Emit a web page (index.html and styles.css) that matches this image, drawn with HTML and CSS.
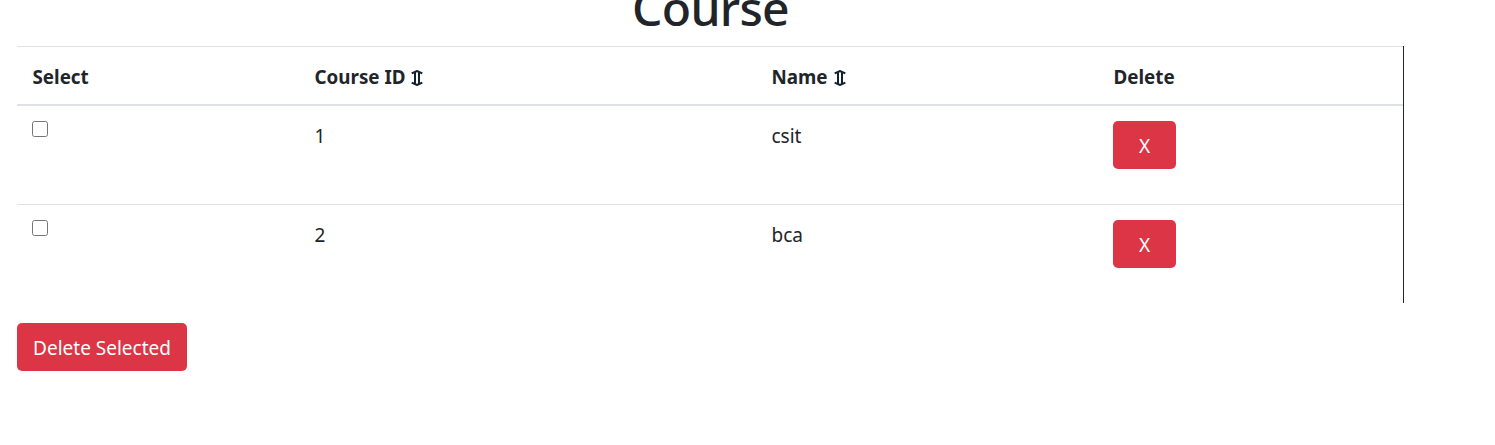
FILE: index.html
```html
<!DOCTYPE html>
<html lang="en">
<head>
<meta charset="utf-8">
<title>Course</title>
<link rel="stylesheet" href="styles.css">
</head>
<body>
<main class="page">
  <h1 class="title">Course</h1>
  <table class="courses">
    <colgroup><col class="col-select"><col class="col-id"><col class="col-name"><col class="col-delete"></colgroup>
    <thead>
      <tr>
        <th>Select</th>
        <th>Course ID<svg class="sort" viewBox="0 0 12 16"><path d="M.7 3.400 6 1l5.300 2.400M.7 12.600 6 15l5.300-2.400M4 2.500v11M8 2.500v11"/></svg></th>
        <th>Name<svg class="sort" viewBox="0 0 12 16"><path d="M.7 3.400 6 1l5.300 2.400M.7 12.600 6 15l5.300-2.400M4 2.500v11M8 2.500v11"/></svg></th>
        <th>Delete</th>
      </tr>
    </thead>
    <tbody>
      <tr><td><input class="check" type="checkbox"></td><td>1</td><td>csit</td><td><button class="btn btn-x">X</button></td></tr>
      <tr><td><input class="check" type="checkbox"></td><td>2</td><td>bca</td><td><button class="btn btn-x">X</button></td></tr>
    </tbody>
  </table>
  <button class="btn btn-all">Delete Selected</button>
</main>
</body>
</html>
```
FILE: styles.css
```css
* { box-sizing: border-box; }
body { margin: 0; background: #fff; color: #212529; font: 20px/30px "Noto Sans", sans-serif; overflow: hidden; }
.page { width: 1387px; margin-left: 17px; }
.title { height: 46px; margin: 0; padding-bottom: 9px; display: flex; justify-content: center; align-items: flex-end; font-size: 48px; line-height: 58px; font-weight: 500; letter-spacing: -0.7px; }
.courses { width: 1387px; table-layout: fixed; border-collapse: separate; border-spacing: 0; border-right: 1px solid #212529; }
.col-select { width: 282px; }
.col-id { width: 457px; }
.col-name { width: 342px; }
th, td { padding: 15px 15px 15px 15.5px; text-align: left; vertical-align: top; }
th { height: 60px; padding-bottom: 12px; border-top: 1px solid #dee2e6; border-bottom: 2px solid #dee2e6; font-size: 18.8px; font-weight: 700; }
td { height: 98px; font-size: 19px; }
td:first-child, td:last-child { padding-left: 15px; }
tr + tr td { height: 99px; border-top: 1px solid #dee2e6; }
.sort { width: 12px; height: 16px; margin-left: 6px; vertical-align: -2px; fill: none; stroke: #14202e; stroke-width: 2; }
.check { display: block; width: 16px; height: 16px; margin: 0; }
.btn { display: block; height: 48px; padding: 2px 0 0; border: 0; border-radius: 5px; background: #dc3545; color: #fff; font: 19px/30px "Noto Sans", sans-serif; }
.btn-x { width: 63px; }
.btn-all { width: 170px; margin-top: 20px; }
```
